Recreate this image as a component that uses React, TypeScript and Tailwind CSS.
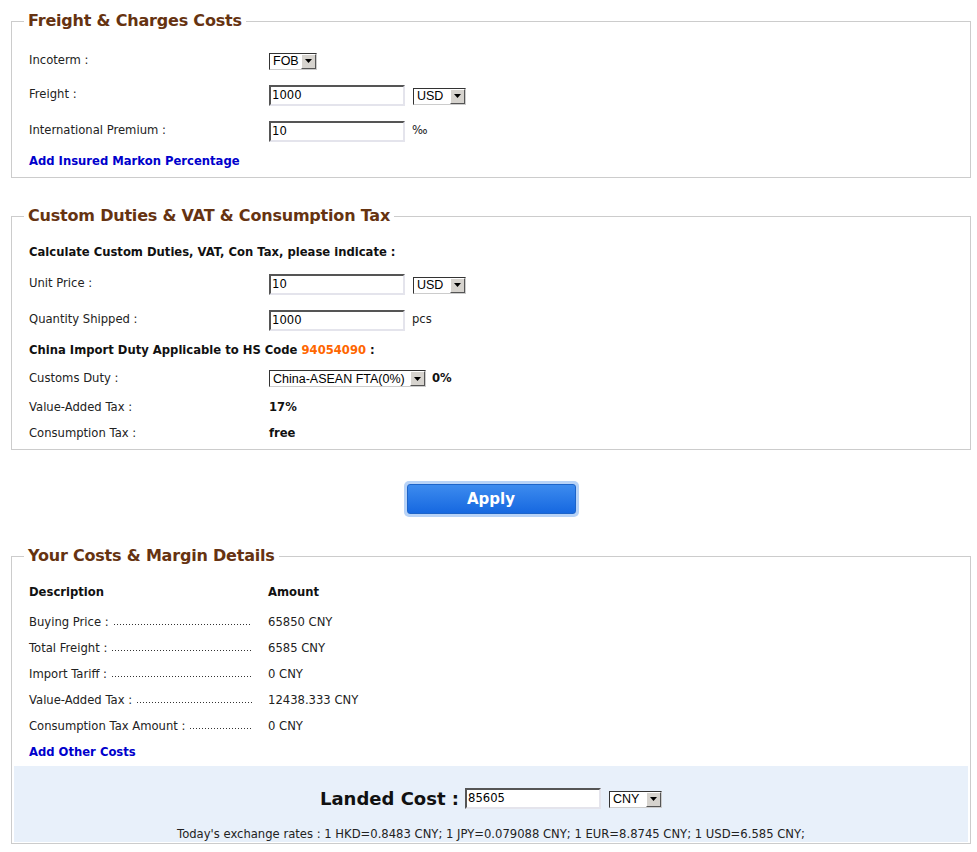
import React from "react";

const FONT = { fontFamily: '"DejaVu Sans", Verdana, sans-serif' } as React.CSSProperties;

function Select({ text, w }: { text: string; w: string }) {
  return (
    <div
      className={`inline-flex h-[17px] items-stretch border-t border-l border-t-[#333] border-l-[#333] border-r border-b border-r-[#ccc] border-b-[#ccc] bg-white ${w}`}
    >
      <div className="flex flex-1 items-center overflow-hidden whitespace-nowrap pl-[3px] text-[12.5px] leading-none text-black" style={{ fontFamily: '"Liberation Sans", Arial, sans-serif' }}>
        {text}
      </div>
      <div className="flex w-[15px] shrink-0 items-center justify-center border-t border-l border-t-white border-l-white border-r border-b border-r-[#555] border-b-[#555] bg-[#d6d3ce]">
        <svg width="7" height="4" viewBox="0 0 7 4">
          <path d="M0 0h7L3.5 4z" fill="#000" />
        </svg>
      </div>
    </div>
  );
}

function Input({ value, w = "w-[136px]" }: { value: string; w?: string }) {
  return (
    <div
      className={`flex h-[21px] items-center border-2 border-t-[#555] border-l-[#555] border-r-[#e4e4ec] border-b-[#e4e4ec] bg-white pl-[1px] pt-[1px] text-[11.6px] leading-none text-black ${w}`}
    >
      {value}
    </div>
  );
}

function Legend({ children }: { children: React.ReactNode }) {
  return (
    <legend className="ml-[12px] px-[4px] text-[16px] font-bold leading-[20px] tracking-[-0.2px] text-[#663311]">
      {children}
    </legend>
  );
}

function Row({ h, label, children }: { h: string; label: React.ReactNode; children?: React.ReactNode }) {
  return (
    <div className={`flex items-center ${h}`}>
      <div className="w-[240px] shrink-0 text-[11.6px] text-[#222]">{label}</div>
      <div className="flex items-center">{children}</div>
    </div>
  );
}

function CostRow({ label, amount }: { label: string; amount: string }) {
  return (
    <div className="flex h-[26px] items-center text-[11.6px] text-[#222]">
      <div className="flex w-[223px] shrink-0 items-center">
        <span className="whitespace-nowrap">{label}</span>
        <span className="ml-[5px] mt-[3px] h-[1px] flex-1 bg-[linear-gradient(to_right,#333_1px,transparent_1px)] bg-[length:3px_1px] bg-repeat-x" />
      </div>
      <div className="ml-[16px]">{amount}</div>
    </div>
  );
}

export default function App() {
  return (
    <div className="min-h-[852px] bg-white pt-[11px]" style={FONT}>
      <div className="ml-[11px] w-[960px]">
        {/* Fieldset 1 */}
        <fieldset className="border border-[#cccccc]">
          <Legend>Freight &amp; Charges Costs</Legend>
          <div className="pl-[17px] pt-[14px] pb-[2px]">
            <Row h="h-[32px]" label="Incoterm :">
              <Select text="FOB" w="w-[48px]" />
            </Row>
            <Row h="h-[36px]" label="Freight :">
              <Input value="1000" />
              <div className="ml-[8px]">
                <Select text="USD" w="w-[53px]" />
              </div>
            </Row>
            <Row h="h-[36px]" label="International Premium :">
              <Input value="10" />
              <span className="ml-[7px] text-[11.6px] text-[#222]">‰</span>
            </Row>
            <div className="flex h-[26px] items-center text-[11.6px] font-bold text-[#0000cc]">
              Add Insured Markon Percentage
            </div>
          </div>
        </fieldset>

        {/* Fieldset 2 */}
        <fieldset className="mt-[28px] border border-[#cccccc]">
          <Legend>Custom Duties &amp; VAT &amp; Consumption Tax</Legend>
          <div className="pl-[17px] pt-[13px] pb-[2px]">
            <div className="flex h-[28px] items-center text-[11.6px] font-bold text-[#111]">
              Calculate Custom Duties, VAT, Con Tax, please indicate :
            </div>
            <Row h="h-[34px]" label="Unit Price :">
              <Input value="10" />
              <div className="ml-[8px]">
                <Select text="USD" w="w-[53px]" />
              </div>
            </Row>
            <Row h="h-[38px]" label="Quantity Shipped :">
              <Input value="1000" />
              <span className="ml-[7px] text-[11.6px] text-[#222]">pcs</span>
            </Row>
            <div className="flex h-[24px] items-center text-[11.6px] font-bold text-[#111]">
              China Import Duty Applicable to HS Code&nbsp;<span className="text-[#ff6600]">94054090</span>&nbsp;:
            </div>
            <Row h="h-[32px]" label="Customs Duty :">
              <Select text="China-ASEAN FTA(0%)" w="w-[157px]" />
              <span className="ml-[6px] text-[11.6px] font-bold text-[#111]">0%</span>
            </Row>
            <Row h="h-[26px]" label="Value-Added Tax :">
              <span className="text-[11.6px] font-bold text-[#111]">17%</span>
            </Row>
            <Row h="h-[26px]" label="Consumption Tax :">
              <span className="text-[11.6px] font-bold text-[#111]">free</span>
            </Row>
          </div>
        </fieldset>

        {/* Apply */}
        <div className="mt-[31px] flex justify-center">
          <div className="rounded-[5px] bg-[#b8d3f7] p-[3px]">
            <button className="flex h-[30px] w-[169px] items-center justify-center rounded-[3px] border border-[#1d64c9] bg-[linear-gradient(to_bottom,#3d8bee,#1668e0)] text-[15px] font-bold text-white">
              Apply
            </button>
          </div>
        </div>

        {/* Fieldset 3 */}
        <fieldset className="mt-[29px] border border-[#cccccc]">
          <Legend>Your Costs &amp; Margin Details</Legend>
          <div className="pl-[17px] pt-[14px]">
            <div className="flex h-[26px] items-center text-[11.6px] font-bold text-[#111]">
              <div className="w-[239px]">Description</div>
              <div>Amount</div>
            </div>
            <div className="h-[4px]" />
            <CostRow label="Buying Price :" amount="65850 CNY" />
            <CostRow label="Total Freight :" amount="6585 CNY" />
            <CostRow label="Import Tariff :" amount="0 CNY" />
            <CostRow label="Value-Added Tax :" amount="12438.333 CNY" />
            <CostRow label="Consumption Tax Amount :" amount="0 CNY" />
            <div className="flex h-[26px] items-center text-[11.6px] font-bold text-[#0000cc]">Add Other Costs</div>
          </div>
          <div className="mx-[2px] mb-[1px] h-[76px] bg-[#e8f0fa]">
            <div className="flex h-[62px] items-center justify-center pt-[2px]">
              <span className="text-[18px] font-bold text-[#111]">Landed Cost :</span>
              <div className="ml-[6px]">
                <Input value="85605" w="w-[136px]" />
              </div>
              <div className="ml-[8px]">
                <Select text="CNY" w="w-[53px]" />
              </div>
            </div>
            <div className="-mt-[2px] text-center text-[11.6px] text-[#222]">
              Today's exchange rates : 1 HKD=0.8483 CNY; 1 JPY=0.079088 CNY; 1 EUR=8.8745 CNY; 1 USD=6.585 CNY;
            </div>
          </div>
        </fieldset>
      </div>
    </div>
  );
}
